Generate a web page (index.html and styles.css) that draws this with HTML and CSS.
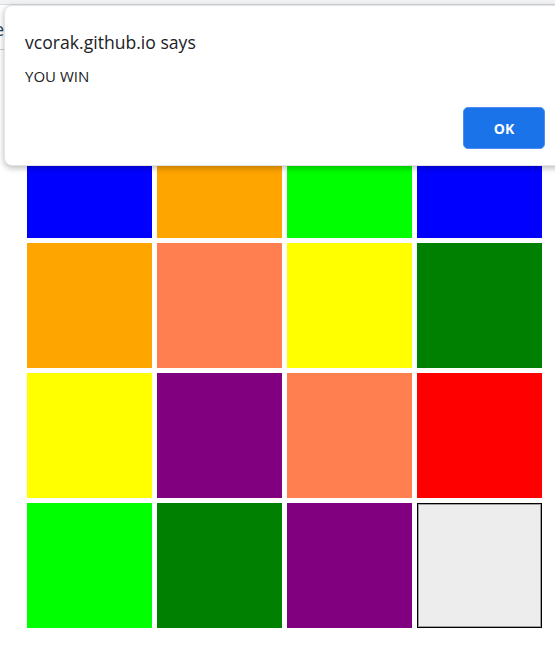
FILE: index.html
```html
<!DOCTYPE html>
<html>
<head>
<meta charset="utf-8">
<link rel="stylesheet" href="styles.css">
</head>
<body>
<div class="topbar"></div>
<div class="behind"><span class="peek">e</span></div>
<div class="board">
  <div class="tile blue"></div>
  <div class="tile orange"></div>
  <div class="tile lime"></div>
  <div class="tile blue"></div>
  <div class="tile orange"></div>
  <div class="tile coral"></div>
  <div class="tile yellow"></div>
  <div class="tile green"></div>
  <div class="tile yellow"></div>
  <div class="tile purple"></div>
  <div class="tile coral"></div>
  <div class="tile red"></div>
  <div class="tile lime"></div>
  <div class="tile green"></div>
  <div class="tile purple"></div>
  <div class="tile empty"></div>
</div>
<div class="dialog">
  <div class="title">vcorak.github.io says</div>
  <div class="message">YOU WIN</div>
  <div class="actions"><button class="ok">OK</button></div>
</div>
</body>
</html>
```
FILE: styles.css
```css
html, body {
  margin: 0;
  padding: 0;
  background: #ffffff;
  width: 555px;
  height: 652px;
  overflow: hidden;
  font-family: "Open Sans", "Noto Sans", sans-serif;
}
.topbar {
  height: 4px;
  background: #f1f3f4;
  border-bottom: 1px solid #dadce0;
}
.behind {
  height: 44px;
  border-bottom: 1px solid #d0d0d0;
  width: 30px;
  position: relative;
}
.peek {
  position: absolute;
  left: -6px;
  top: 12px;
  font-size: 18px;
  color: #2a3f5f;
}
.board {
  display: grid;
  grid-template-columns: repeat(4, 125px);
  grid-auto-rows: 125px;
  gap: 5px;
  padding-left: 27px;
  margin-top: 63px;
}
.tile { box-sizing: border-box; }
.blue { background: #0000ff; }
.orange { background: #ffa500; }
.lime { background: #00ff00; }
.coral { background: #ff7f50; }
.yellow { background: #ffff00; }
.green { background: #008000; }
.purple { background: #800080; }
.red { background: #ff0000; }
.empty {
  background: #ededed;
  border: 1px solid #000;
  box-shadow: inset 0 0 0 1px #a0a0a0;
}
.dialog {
  position: absolute;
  left: 4px;
  top: 5px;
  width: 570px;
  height: 161px;
  box-sizing: border-box;
  background: #fff;
  border: 1px solid #e3e3e3;
  border-radius: 8px;
  box-shadow: 0 2px 6px rgba(0,0,0,0.28);
  padding: 26px 0 0 20px;
}
.title {
  font-size: 17.6px;
  line-height: 20px;
  color: #202124;
}
.message {
  margin-top: 15px;
  font-size: 15px;
  line-height: 18px;
  color: #202124;
}
.actions {
  position: absolute;
  left: 458px;
  top: 101px;
}
.ok {
  width: 82px;
  height: 42px;
  background: #1a73e8;
  border: 1px solid #4d8ff0;
  border-radius: 5px;
  color: #fff;
  font-family: "Open Sans", "Noto Sans", sans-serif;
  font-weight: 700;
  font-size: 14px;
  padding: 0;
}
```
